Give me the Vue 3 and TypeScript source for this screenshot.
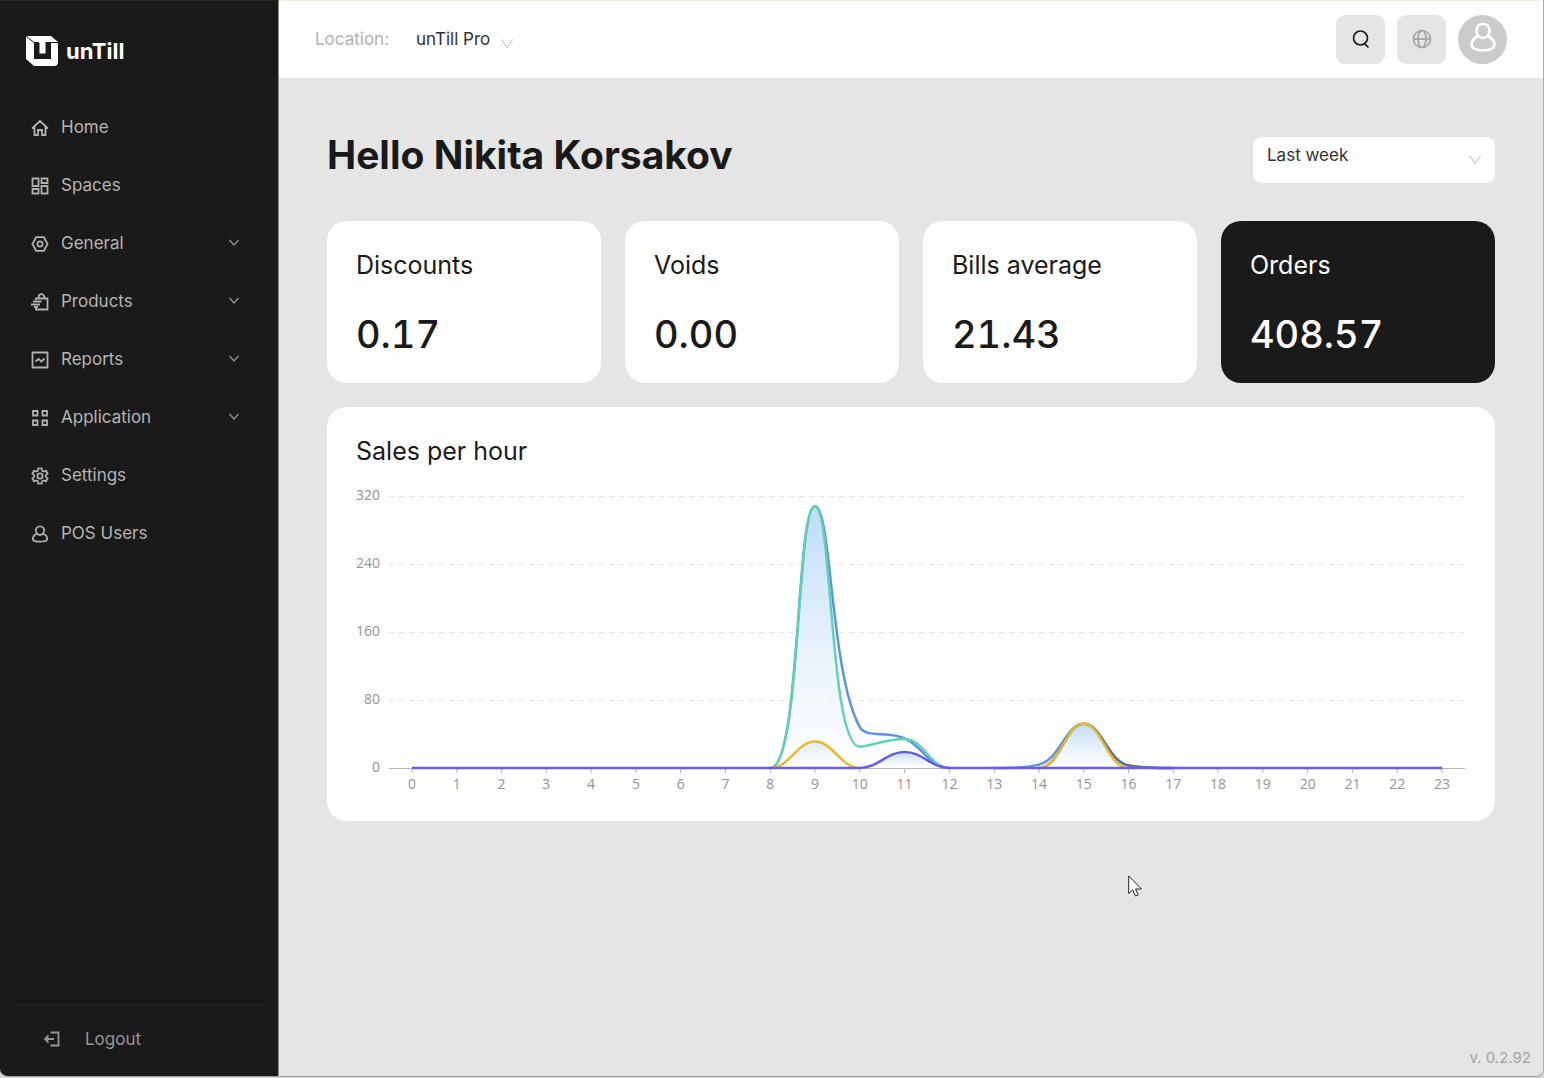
<script setup lang="ts">
import { ref } from 'vue'

interface NavItem {
  label: string
  icon: string
  expandable?: boolean
}

const navItems: NavItem[] = [
  { label: 'Home', icon: 'home' },
  { label: 'Spaces', icon: 'spaces' },
  { label: 'General', icon: 'general', expandable: true },
  { label: 'Products', icon: 'products', expandable: true },
  { label: 'Reports', icon: 'reports', expandable: true },
  { label: 'Application', icon: 'application', expandable: true },
  { label: 'Settings', icon: 'settings' },
  { label: 'POS Users', icon: 'user' },
]

const stats = [
  { label: 'Discounts', value: '0.17' },
  { label: 'Voids', value: '0.00' },
  { label: 'Bills average', value: '21.43' },
  { label: 'Orders', value: '408.57', dark: true },
]

const location = ref('unTill Pro')
const period = ref('Last week')

/* Chart geometry, in view box units */
const baseY = 288
const gridStep = 68
const left = 56
const right = 1086
const smooth = 0.4
const yTicks = [320, 240, 160, 80, 0]
const hours = Array.from({ length: 24 }, (_, i) => i)

const xOf = (h: number) => left + ((right - left) / 23) * h
const yOf = (v: number) => baseY - (v / 80) * gridStep

interface Series {
  id: string
  color: string
  fill?: boolean
  baseline?: boolean
  points: Record<number, number>
}

const series: Series[] = [
  { id: 'total', color: '#5f90e8', points: { 9: 308, 10: 48, 11: 35, 14: 4, 15: 52, 16: 3 } },
  { id: 'card', color: '#5fd3b0', fill: true, points: { 9: 308, 10: 25, 11: 34 } },
  { id: 'other', color: '#5d7092', points: { 15: 52, 16: 3 } },
  { id: 'cash', color: '#eab92e', fill: true, points: { 9: 31, 15: 52 } },
  { id: 'account', color: '#6b5be0', fill: true, baseline: true, points: { 11: 19 } },
]

type Pt = [number, number]
const clamp = (v: number, a: number, b: number) => Math.max(Math.min(a, b), Math.min(Math.max(a, b), v))

/* Smooth line that never overshoots its neighbours; empty hours are skipped unless the series keeps its baseline */
function linePath(s: Series): string {
  const value = (h: number) => s.points[h] ?? 0
  const pts: Pt[] = hours.map((h) => [xOf(h), yOf(value(h))])
  let d = `M${pts[0][0]} ${pts[0][1]}`
  let out: Pt = pts[0]
  for (let i = 1; i < pts.length; i++) {
    const p = pts[i]
    const prev = pts[i - 1]
    let inCp: Pt = p
    let nextOut: Pt = p
    if (i < pts.length - 1) {
      const next = pts[i + 1]
      const lp = Math.hypot(p[0] - prev[0], p[1] - prev[1])
      const ln = Math.hypot(next[0] - p[0], next[1] - p[1])
      const k = (smooth * ln) / (ln + lp)
      const ox = clamp(p[0] + (next[0] - prev[0]) * k, p[0], next[0])
      const oy = clamp(p[1] + (next[1] - prev[1]) * k, p[1], next[1])
      const ix = clamp(p[0] - ((ox - p[0]) * lp) / ln, prev[0], p[0])
      const iy = clamp(p[1] - ((oy - p[1]) * lp) / ln, prev[1], p[1])
      inCp = [ix, iy]
      nextOut = [p[0] + ((p[0] - ix) * ln) / lp, p[1] + ((p[1] - iy) * ln) / lp]
    }
    if (!s.baseline && value(i) === 0 && value(i - 1) === 0) {
      d += ` M${p[0].toFixed(1)} ${p[1]}`
    } else {
      d += ` C${[...out, ...inCp, ...p].map((n) => n.toFixed(1)).join(' ')}`
    }
    out = nextOut
  }
  return d
}

const lines = series.map((s) => ({ ...s, d: linePath(s) }))
const areas = lines.filter((l) => l.fill)
</script>

<template>
  <div class="app">
    <aside class="sidebar">
      <a class="logo" href="#">
        <svg width="32" height="30" viewBox="0 0 32 30" aria-hidden="true">
          <path d="M2 0H25L32 6V26Q32 30 28 30H8L0 23V2Q0 0 2 0Z" fill="#fff" />
          <path d="M8 7H13.500V17.500H19.500V7H25V23H8Z" fill="#1a1a1a" />
          <path d="M0.500 0.500L8 6.500H13M19.500 6.500H32" fill="none" stroke="#1a1a1a" stroke-width="1" />
        </svg>
        <span>unTill</span>
      </a>

      <nav class="nav">
        <a v-for="item in navItems" :key="item.label" class="nav-item" href="#">
          <svg class="nav-icon" width="18" height="18" viewBox="0 0 18 18" aria-hidden="true">
            <path v-if="item.icon === 'home'" d="M1 9.500L9 2L17 9.500M3.500 8V16H7V11H11V16H14.500V8" />
            <path v-else-if="item.icon === 'spaces'" d="M1.500 1.500H7.500V9H1.500ZM10.500 1.500H16.500V6H10.500ZM1.500 12H7.500V16.500H1.500ZM10.500 9H16.500V16.500H10.500Z" />
            <g v-else-if="item.icon === 'general'">
              <path d="M5.200 2.200H12.800L16.600 9L12.800 15.800H5.200L1.400 9Z" />
              <circle cx="9" cy="9" r="2.600" />
            </g>
            <path v-else-if="item.icon === 'products'" d="M5 7V5.500H16.500V16.500H5V14.500M7.700 5.500V4A2.800 2.800 0 0 1 13.300 4V5.500M2 8.500H10.500M0 11.500H9M3 14H7" />
            <path v-else-if="item.icon === 'reports'" d="M1.500 1.500H16.500V16.500H1.500ZM4.500 10.500L7.500 8L10.500 10.500L13.500 7.500" />
            <path v-else-if="item.icon === 'application'" d="M2 2H6.500V6.500H2ZM11.500 2H16V6.500H11.500ZM2 11.500H6.500V16H2ZM11.500 11.500H16V16H11.500Z" />
            <g v-else-if="item.icon === 'settings'">
              <path d="M7.300 1.300H10.700L11.200 3.700L12.600 4.500L14.900 3.700L16.600 6.600L14.800 8.200V9.800L16.600 11.400L14.900 14.300L12.600 13.500L11.200 14.300L10.700 16.700H7.300L6.800 14.300L5.400 13.500L3.100 14.300L1.400 11.400L3.200 9.800V8.200L1.400 6.600L3.100 3.700L5.400 4.500L6.800 3.700Z" />
              <circle cx="9" cy="9" r="2.600" />
            </g>
            <path v-else d="M6.200 8.700C5.300 7.800 4.900 6.700 4.900 5.500C4.900 3.200 6.500 1.300 9 1.300S13.100 3.200 13.100 5.500C13.100 6.700 12.700 7.800 11.800 8.700C14.500 9.700 16.200 11.800 16.200 14C16.200 15.800 13 16.700 9 16.700S1.800 15.800 1.800 14C1.800 11.800 3.500 9.700 6.200 8.700ZM6.200 8.700Q9 11.300 11.800 8.700" />
          </svg>
          <span class="nav-label">{{ item.label }}</span>
          <svg v-if="item.expandable" width="12" height="8" viewBox="0 0 12 8" aria-hidden="true">
            <path d="M1.500 1L6 6L10.500 1" fill="none" stroke="#8c8c8c" stroke-width="1.500" />
          </svg>
        </a>
      </nav>

      <button class="logout" type="button">
        <svg width="16" height="16" viewBox="0 0 16 16" aria-hidden="true">
          <path d="M6.500 1.500H14.500V14.500H6.500M1 8H10M4.500 4.500L1 8L4.500 11.500" fill="none" stroke="currentColor" stroke-width="1.800" />
        </svg>
        <span>Logout</span>
      </button>
    </aside>

    <div class="main">
      <header class="topbar">
        <label class="location-label" for="location">Location:</label>
        <div class="location-picker">
          <select id="location" v-model="location">
            <option>unTill Pro</option>
          </select>
          <svg class="chevron" width="12" height="10" viewBox="0 0 12 10" aria-hidden="true">
            <path d="M0.500 0.500L6 8.500L11.500 0.500" />
          </svg>
        </div>
        <div class="actions">
          <button class="tool" type="button" aria-label="Search">
            <svg width="20" height="20" viewBox="0 0 20 20" fill="none" stroke="#1a1a1a" stroke-width="1.700" aria-hidden="true">
              <circle cx="9.500" cy="9" r="7" />
              <path d="M13 14L17.500 18.500" />
            </svg>
          </button>
          <button class="tool" type="button" aria-label="Language">
            <svg width="20" height="20" viewBox="0 0 20 20" fill="none" stroke="#a3a3a3" stroke-width="1.700" aria-hidden="true">
              <circle cx="10" cy="10" r="8.500" />
              <ellipse cx="10" cy="10" rx="4" ry="8.500" />
              <path d="M1.500 10H18.500" />
            </svg>
          </button>
          <button class="avatar" type="button" aria-label="Account">
            <svg width="28" height="32" viewBox="0 0 28 32" fill="none" stroke="#fff" stroke-width="2.600" aria-hidden="true">
              <path d="M14 2C18 2 20.500 5 20.500 8.500C20.500 12.500 18 16 14 16S7.500 12.500 7.500 8.500C7.500 5 10 2 14 2Z" />
              <path d="M8.500 14.500C4.500 16.500 2.500 19.500 2.500 23C2.500 26 7.500 28.500 14 28.500S25.500 26 25.500 23C25.500 19.500 23.500 16.500 19.500 14.500" />
            </svg>
          </button>
        </div>
      </header>

      <main class="content">
        <div class="heading">
          <h1>Hello Nikita Korsakov</h1>
          <div class="period">
            <select v-model="period" aria-label="Period">
              <option>Last week</option>
            </select>
            <svg class="chevron" width="12" height="10" viewBox="0 0 12 10" aria-hidden="true">
              <path d="M0.500 0.500L6 8.500L11.500 0.500" />
            </svg>
          </div>
        </div>

        <section class="stats">
          <article v-for="s in stats" :key="s.label" class="card" :class="{ dark: s.dark }">
            <h2>{{ s.label }}</h2>
            <p class="value">{{ s.value }}</p>
          </article>
        </section>

        <section class="card chart-card">
          <h2>Sales per hour</h2>
          <svg class="chart" viewBox="0 0 1110 325" role="img" aria-label="Sales per hour">
            <defs>
              <linearGradient id="area" x1="0" y1="0" x2="0" y2="1">
                <stop offset="0" stop-color="#bcdcf6" />
                <stop offset="1" stop-color="#fff" stop-opacity="0.6" />
              </linearGradient>
            </defs>
            <g v-for="t in yTicks" :key="t">
              <text class="tick" x="24" :y="yOf(t) + 4" text-anchor="end">{{ t }}</text>
              <line v-if="t > 0" class="grid" x1="33" x2="1109" :y1="yOf(t) + 0.5" :y2="yOf(t) + 0.5" />
            </g>
            <line class="axis" x1="33" x2="1109" :y1="baseY + 0.5" :y2="baseY + 0.5" />
            <g v-for="h in hours" :key="h">
              <line class="axis" :x1="xOf(h)" :x2="xOf(h)" :y1="baseY" :y2="baseY + 5" />
              <text class="tick" :x="xOf(h)" :y="baseY + 21" text-anchor="middle">{{ h }}</text>
            </g>
            <path v-for="a in areas" :key="a.id" :d="a.d + 'Z'" fill="url(#area)" />
            <path v-for="l in lines" :key="l.id" :d="l.d" fill="none" :stroke="l.color" stroke-width="2.500" />
          </svg>
        </section>

        <footer class="version">v. 0.2.92</footer>
      </main>
    </div>

    <svg class="pointer" width="15" height="23" viewBox="0 0 15 23" aria-hidden="true">
      <path d="M0.700 1V18.500L4.700 14.800L7.500 21L10.300 19.800L7.600 14H13.500Z" fill="#fff" stroke="#222" stroke-width="1" />
    </svg>
  </div>
</template>

<style>
html,
body {
  background: #d4d4d4;
}
</style>

<style scoped>
.app {
  box-sizing: border-box;
  position: relative;
  display: flex;
  min-height: calc(100vh - 1px);
  overflow: hidden;
  border-right: 1px solid #adadad;
  border-bottom: 1px solid #a0a0a0;
  border-radius: 0 0 8px 8px;
  background: #e5e5e6;
  color: #1a1a1a;
  font-family: Inter, "Liberation Sans", sans-serif;
}

a {
  color: inherit;
  text-decoration: none;
}

h1,
h2,
p {
  margin: 0;
}

button,
select {
  margin: 0;
  border: 0;
  color: inherit;
  font: inherit;
}

.sidebar {
  box-sizing: border-box;
  display: flex;
  flex: none;
  flex-direction: column;
  width: 279px;
  border-top: 1px solid #2b2b1c;
  border-right: 1px solid #8f8f8f;
  background: #1a1a1a;
  color: #b4b4b4;
}

.logo {
  display: flex;
  align-items: center;
  gap: 8px;
  margin: 35px 26px 32px;
  color: #fff;
  font-size: 22px;
  font-weight: 700;
  line-height: 30px;
}

.nav-item {
  display: flex;
  align-items: center;
  height: 58px;
  padding: 0 38px 0 31px;
}

.nav-icon {
  margin: 2px 12px 0 0;
  fill: none;
  stroke: #b0b0b0;
  stroke-width: 1.8;
}

.nav-label {
  flex: 1;
  font-size: 17px;
}

.logout {
  display: flex;
  align-items: center;
  gap: 25px;
  height: 71px;
  margin: auto 12px 0;
  padding: 0 32px 4px;
  border-top: 1px solid #262626;
  background: none;
  color: #959595;
  font-size: 17px;
}

.main {
  display: flex;
  flex: 1;
  flex-direction: column;
  min-width: 0;
}

.topbar {
  box-sizing: border-box;
  display: flex;
  align-items: center;
  height: 78px;
  padding: 0 36px 1px;
  border-top: 1px solid #f1f4dc;
  background: #fefefe;
}

.location-label {
  margin-right: 27px;
  color: #b0b0b0;
  font-size: 17px;
}

.location-picker,
.period {
  position: relative;
}

select {
  appearance: none;
  outline: none;
  cursor: pointer;
}

.location-picker select {
  padding: 0 22px 0 0;
  background: none;
  color: #333;
  font-size: 17px;
}

.chevron {
  position: absolute;
  fill: none;
  stroke: #b5b5b5;
}

.location-picker .chevron {
  right: 0;
  bottom: 0;
}

.actions {
  display: flex;
  gap: 12px;
  margin-left: auto;
}

.tool,
.avatar {
  display: flex;
  align-items: center;
  justify-content: center;
  width: 49px;
  height: 49px;
  padding: 0;
  border-radius: 9px;
  background: #e5e5e6;
}

.avatar {
  padding-bottom: 3px;
  border-radius: 50%;
  background: #cbcbcb;
}

.content {
  display: flex;
  flex: 1;
  flex-direction: column;
  padding: 59px 48px 0;
}

.heading {
  display: flex;
  justify-content: space-between;
  margin-bottom: 38px;
}

h1 {
  font-size: 39px;
  font-weight: 700;
  line-height: 36px;
}

.period select {
  width: 242px;
  height: 46px;
  padding: 0 40px 10px 14px;
  border-radius: 9px;
  background: #fefefe;
  color: #333;
  font-size: 17px;
}

.period .chevron {
  top: 18px;
  right: 14px;
}

.stats {
  display: grid;
  grid-template-columns: repeat(4, 1fr);
  gap: 24px;
  margin-bottom: 24px;
}

.card {
  padding: 29px 29px 25px;
  border-radius: 20px;
  background: #fefefe;
}

.card.dark {
  background: #1a1a1a;
  color: #fff;
}

.card h2 {
  font-size: 25px;
  font-weight: 400;
  line-height: 30px;
}

.value {
  margin-top: 30px;
  font-size: 38px;
  font-variant-numeric: tabular-nums;
  font-weight: 500;
  line-height: 48px;
}

.chart-card {
  padding-bottom: 16px;
}

.chart {
  display: block;
  width: 100%;
  margin-top: 14px;
}

.tick {
  fill: #949494;
  font-family: "Open Sans", "Noto Sans", sans-serif;
  font-size: 14px;
}

.grid {
  stroke: #e3e3ea;
  stroke-dasharray: 5 5;
}

.axis {
  stroke: #b5b5bb;
}

.version {
  margin: auto -36px 9px 0;
  color: #a3a3a3;
  font-size: 15px;
  line-height: 18px;
  text-align: right;
}

.pointer {
  position: absolute;
  top: 875px;
  left: 1128px;
}
</style>
